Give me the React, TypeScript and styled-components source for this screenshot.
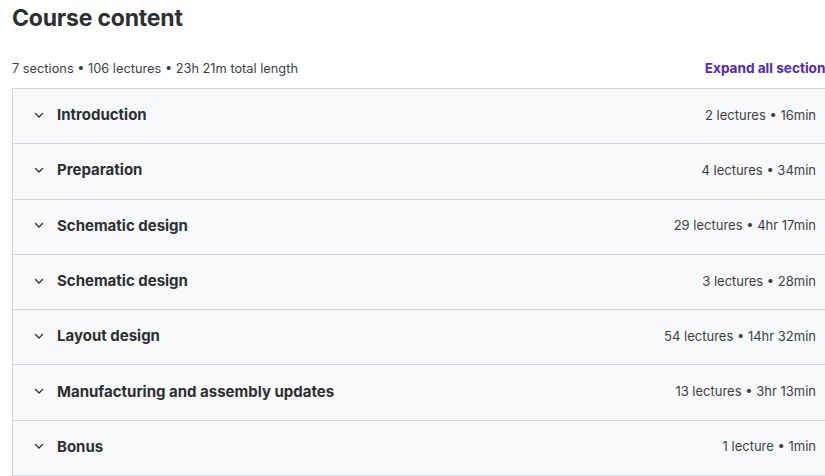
import React from 'react';
import styled, { createGlobalStyle } from 'styled-components';

const sections = [
  { title: 'Introduction', meta: '2 lectures • 16min' },
  { title: 'Preparation', meta: '4 lectures • 34min' },
  { title: 'Schematic design', meta: '29 lectures • 4hr 17min' },
  { title: 'Schematic design', meta: '3 lectures • 28min' },
  { title: 'Layout design', meta: '54 lectures • 14hr 32min' },
  { title: 'Manufacturing and assembly updates', meta: '13 lectures • 3hr 13min' },
  { title: 'Bonus', meta: '1 lecture • 1min' },
];

const GlobalStyle = createGlobalStyle`
  body {
    margin: 0;
    background: #fff;
    overflow: hidden;
    font-family: Inter, "Noto Sans", sans-serif;
    color: #2d2f31;
  }
`;

const Page = styled.div`
  width: 821px;
  padding: 4px 0 0 12px;
`;

const Title = styled.h2`
  margin: 0;
  font-size: 23px;
  font-weight: 700;
  line-height: 28px;
  letter-spacing: -0.2px;
`;

const Summary = styled.div`
  display: flex;
  justify-content: space-between;
  align-items: center;
  margin-top: 25px;
  height: 22px;
  margin-bottom: 9px;
`;

const Stats = styled.span`
  font-size: 12.8px;
  color: #3e4143;
`;

const ExpandAll = styled.button`
  border: none;
  background: none;
  padding: 0;
  font-family: inherit;
  font-size: 13.6px;
  font-weight: 700;
  color: #5624d0;
  white-space: nowrap;
  cursor: pointer;
`;

const List = styled.div`
  border: 1px solid #d1d7dc;
  border-bottom: none;
`;

const Row = styled.div`
  display: flex;
  align-items: center;
  height: 55.3px;
  padding: 0 16px 3px 20px;
  box-sizing: border-box;
  background: #f7f9fa;
  border-bottom: 1px solid #d1d7dc;
`;

const Chevron = styled.svg`
  width: 12px;
  height: 12px;
  margin-right: 12px;
  flex-shrink: 0;
`;

const SectionTitle = styled.span`
  flex: 1;
  font-size: 15px;
  font-weight: 700;
  color: #2d2f31;
`;

const Meta = styled.span`
  font-size: 13px;
  color: #3e4143;
`;

export default function App() {
  return (
    <Page>
      <GlobalStyle />
      <Title>Course content</Title>
      <Summary>
        <Stats>7 sections • 106 lectures • 23h 21m total length</Stats>
        <ExpandAll>Expand all sections</ExpandAll>
      </Summary>
      <List>
        {sections.map((s, i) => (
          <Row key={i}>
            <Chevron viewBox="0 0 12 12" fill="none">
              <path d="M2.5 4.5 6 8l3.5-3.5" stroke="#2d2f31" strokeWidth="1.3" strokeLinecap="round" strokeLinejoin="round" />
            </Chevron>
            <SectionTitle>{s.title}</SectionTitle>
            <Meta>{s.meta}</Meta>
          </Row>
        ))}
      </List>
    </Page>
  );
}
